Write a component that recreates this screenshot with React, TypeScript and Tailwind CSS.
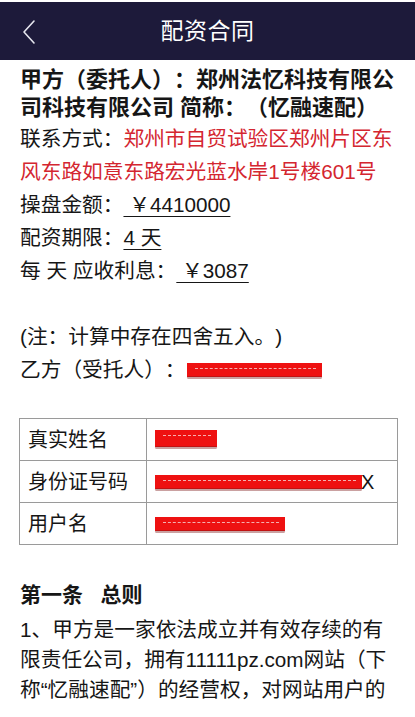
const CJK = { fontFamily: '"Liberation Sans", "Noto Sans CJK SC", sans-serif' }

export default function App() {
  return (
    <main className="min-h-screen bg-white text-[#161616] pt-[2px] [text-spacing-trim:space-all]" style={CJK}>
      {/* Nav bar */}
      <div className="relative h-[58px] bg-[#1d1a3a] flex items-center justify-center">
        <svg className="absolute left-[20px] top-[17px]" width="18" height="26" viewBox="0 0 18 26" fill="none">
          <path d="M14 2 L4 13 L14 24" stroke="#e6e6ee" strokeWidth="1.6" strokeLinecap="round" strokeLinejoin="round" />
        </svg>
        <span className="text-white text-[23px] tracking-[0.5px]">配资合同</span>
      </div>

      <div className="px-[20px] pt-[6px]">
        {/* Party A */}
        <div className="font-bold text-[22px] leading-[28px] whitespace-nowrap">
          甲方（委托人）：郑州法忆科技有限公<br />
          司科技有限公司 简称：（忆融速配）
        </div>

        <div className="text-[20.7px] leading-[33px] whitespace-nowrap">
          <div>
            联系方式：
            <span className="text-[#d42630]">郑州市自贸试验区郑州片区东</span>
          </div>
          <div className="text-[#d42630]">风东路如意东路宏光蓝水岸1号楼601号</div>
          <div>
            操盘金额：<span className="underline underline-offset-4 decoration-1"> ￥4410000</span>
          </div>
          <div>
            配资期限：<span className="underline underline-offset-4 decoration-1">4 天</span>
          </div>
          <div>
            每 天 应收利息：<span className="underline underline-offset-4 decoration-1"> ￥3087</span>
          </div>
          <div className="h-[33px]" />
          <div>(注：计算中存在四舍五入。)</div>
          <div className="flex items-center">
            乙方（受托人）：
            <Redact className="ml-[1px] w-[135px]" />
          </div>
        </div>

        {/* Party B table */}
        <table className="mt-[32px] w-[379px] -ml-[1px] border-collapse text-[20px]">
          <tbody>
            <Row label="真实姓名">
              <Redact className="w-[62px] h-[17px]" />
            </Row>
            <Row label="身份证号码">
              <div className="flex items-center">
                <Redact className="w-[207px] h-[14px]" />
                <span className="text-[20px] leading-none -ml-[1px]">X</span>
              </div>
            </Row>
            <Row label="用户名">
              <Redact className="w-[130px] h-[14px]" />
            </Row>
          </tbody>
        </table>

        {/* Article 1 */}
        <div className="mt-[35px] font-bold text-[21px] leading-[30px]">第一条&nbsp;&nbsp;&nbsp;总则</div>
        <div className="text-[20.7px] leading-[30px] pt-[5px] whitespace-nowrap">
          1、甲方是一家依法成立并有效存续的有<br />
          限责任公司，拥有11111pz.com网站（下<br />
          称“忆融速配”）的经营权，对网站用户的
        </div>
      </div>
    </main>
  )
}

function Row({ label, children }: { label: string; children: React.ReactNode }) {
  return (
    <tr className="h-[42px]">
      <td className="w-[127px] border border-[#9a9a9a] pl-[8px] align-middle">{label}</td>
      <td className="border border-[#9a9a9a] pl-[8px] align-middle">{children}</td>
    </tr>
  )
}

function Redact({ className = '' }: { className?: string }) {
  return (
    <span className={`relative inline-block h-[14px] bg-[#ee1111] ${className}`}>
      <span className="absolute left-[8px] right-[6px] top-[5px] border-t border-dashed border-[#f3b0b0]" />
      <span className="absolute left-0 right-0 -bottom-[2px] h-[3px] bg-[#7a1515] opacity-40 rounded-full" />
    </span>
  )
}
